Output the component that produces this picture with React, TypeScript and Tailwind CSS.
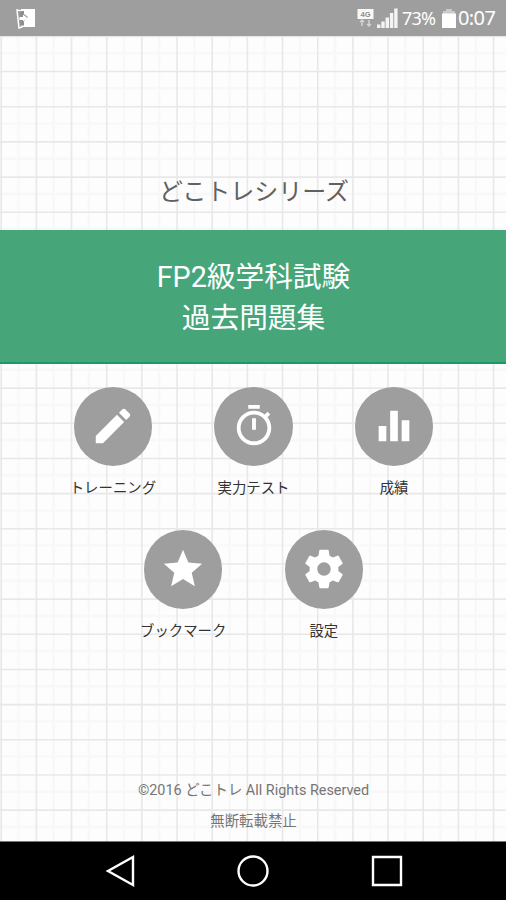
import { ReactNode } from "react";

const GRID = 35.17;

const paths = {
  edit: "M3 17.25V21h3.75L17.81 9.94l-3.75-3.75L3 17.25zM20.71 7.04c.39-.39.39-1.02 0-1.41l-2.34-2.34c-.39-.39-1.02-.39-1.41 0l-1.83 1.83 3.75 3.75 1.83-1.83z",
  timer:
    "M15 1H9v2h6V1zm-4 13h2V8h-2v6zm8.03-6.61l1.42-1.42c-.43-.51-.9-.99-1.41-1.41l-1.42 1.42C16.07 4.74 14.12 4 12 4c-4.97 0-9 4.03-9 9s4.02 9 9 9 9-4.03 9-9c0-2.12-.74-4.07-1.97-5.61zM12 20c-3.87 0-7-3.13-7-7s3.13-7 7-7 7 3.13 7 7-3.13 7-7 7z",
  chart: "M10 20h4V4h-4v16zm-6 0h4v-8H4v8zM16 9v11h4V9h-4z",
  star: "M12 17.27L18.18 21l-1.64-7.03L22 9.24l-7.19-.61L12 2 9.19 8.63 2 9.24l5.46 4.73L5.82 21z",
  settings:
    "M19.43 12.98c.04-.32.07-.64.07-.98s-.03-.66-.07-.98l2.11-1.65c.19-.15.24-.42.12-.64l-2-3.46c-.12-.22-.39-.3-.61-.22l-2.49 1c-.52-.4-1.08-.73-1.69-.98l-.38-2.65C14.46 2.18 14.25 2 14 2h-4c-.25 0-.46.18-.49.42l-.38 2.65c-.61.25-1.17.59-1.69.98l-2.49-1c-.23-.09-.49 0-.61.22l-2 3.46c-.13.22-.07.49.12.64l2.11 1.65c-.04.32-.07.65-.07.98s.03.66.07.98l-2.11 1.65c-.19.15-.24.42-.12.64l2 3.46c.12.22.39.3.61.22l2.49-1c.52.4 1.08.73 1.69.98l.38 2.65c.03.24.24.42.49.42h4c.25 0 .46-.18.49-.42l.38-2.65c.61-.25 1.17-.59 1.69-.98l2.49 1c.23.09.49 0 .61-.22l2-3.46c.12-.22.07-.49-.12-.64l-2.11-1.65zM12 15.5c-1.93 0-3.5-1.57-3.5-3.5s1.57-3.5 3.5-3.5 3.5 1.57 3.5 3.5-1.57 3.5-3.5 3.5z",
};

const GridPaper = () => (
  <svg className="absolute inset-0" width="506" height="805" fill="none">
    {Array.from({ length: 24 }, (_, i) => (
      <g key={i}>
        <path d={`M${18.5 + i * GRID} 0V805`} stroke="#f8f8f8" strokeWidth="2.5" />
        <path d={`M0 ${17.2 + i * GRID}H506`} stroke="#f8f8f8" strokeWidth="2.5" />
      </g>
    ))}
    {Array.from({ length: 24 }, (_, i) => (
      <g key={i}>
        <path d={`M${1.2 + i * GRID} 0V805`} stroke="#e8e8e8" strokeWidth="1.6" />
        <path d={`M0 ${0.4 + i * GRID}H506`} stroke="#e8e8e8" strokeWidth="1.6" />
      </g>
    ))}
  </svg>
);

const StatusBar = () => (
  <div className="flex h-9 items-center bg-[#9e9e9e] pr-[9px] pl-4 text-white">
    <svg width="20" height="21" viewBox="0 0 20 21">
      <path d="M5 1h14v18H5z" fill="#fff" />
      <path d="M1 2l5 1v16l-3 1z" fill="#999" stroke="#fff" strokeWidth="1.5" />
      <path d="M4.5 3H8v3l4 3-4 4v4.5H4.5z" fill="#8e8e8e" />
      <path d="M3.5 10.5h5" stroke="#fff" strokeWidth="3" />
      <path d="M7 6.500l4.500 3.500-4.500 3.500z" fill="#fff" />
    </svg>
    <div className="ml-auto flex items-center">
      <svg width="17" height="20" viewBox="0 0 17 20" className="mr-[3px]">
        <rect x="0.5" y="1" width="16" height="10" fill="#f8f8f8" />
        <text x="8.5" y="8.8" textAnchor="middle" fontSize="7.5" fontFamily="Liberation Sans, sans-serif" fontWeight="bold" fill="#8c8c8c">
          4G
        </text>
        <path d="M5 12v6M3 14l2-2 2 2M12 12v6M10 16l2 2 2-2" fill="none" stroke="#d4d4d4" strokeWidth="1.5" />
      </svg>
      <svg width="21" height="21" viewBox="0 0 21 21" fill="#f4f4f4">
        <path d="M0 16.5h3.4V20H0zM4.3 13.5h3.4V20H4.3zM8.6 9.5H12V20H8.6zM12.9 5h3.4v15h-3.4zM17.2.5h3.4V20h-3.4z" />
      </svg>
      <span className="ml-[4px] w-[34px] font-['Noto_Sans',sans-serif] text-[18px] leading-none tracking-[-0.8px] whitespace-nowrap">
        73%
      </span>
      <svg width="14" height="21" viewBox="0 0 14 21" className="ml-[6px]">
        <path d="M4 1h6v2h3v4H1V3h3z" fill="#cbcbcb" />
        <path d="M0 5.5h14V20H0z" fill="#fff" />
      </svg>
      <span className="ml-[2px] w-[39px] font-['Noto_Sans',sans-serif] text-[20px] leading-none tracking-[-0.6px] whitespace-nowrap">
        0:07
      </span>
    </div>
  </div>
);

const MenuButton = ({ icon, label }: { icon: keyof typeof paths; label: string }) => (
  <button className="flex w-[140.6px] flex-col items-center">
    <span className="flex size-[78.5px] items-center justify-center rounded-full bg-[#9e9e9e]">
      <svg width="46" height="46" viewBox="0 0 24 24" fill="#fff">
        <path d={paths[icon]} />
      </svg>
    </span>
    <span className="mt-[13px] text-[14.4px] leading-5 whitespace-nowrap text-[#333]">{label}</span>
  </button>
);

const NavIcon = ({ children }: { children: ReactNode }) => (
  <svg width="34" height="34" viewBox="0 0 34 34" fill="none" stroke="#fff" strokeWidth="2.4">
    {children}
  </svg>
);

const App = () => (
  <div className="flex h-[900px] w-[506px] flex-col overflow-hidden bg-[#fdfdfd] font-['Roboto','Noto_Sans_CJK_JP',sans-serif]">
    <StatusBar />

    <main className="relative flex h-[805px] flex-col overflow-hidden">
      <GridPaper />
      <div className="relative flex flex-1 flex-col items-center pl-px">
        <p className="mt-[138px] h-9 pl-px text-[24px] leading-9 text-[#616161]">どこトレシリーズ</p>

        <h1 className="mt-[19.5px] -ml-px flex h-[134.5px] w-[506px] flex-col items-center border-b-2 border-[#189b68] bg-[#46a67a] pt-[27.5px] pl-px text-[28.7px] leading-[41px] font-normal text-white">
          <span>FP2級学科試験</span>
          <span>過去問題集</span>
        </h1>

        <div className="mt-[23px] flex">
          <MenuButton icon="edit" label="トレーニング" />
          <MenuButton icon="timer" label="実力テスト" />
          <MenuButton icon="chart" label="成績" />
        </div>
        <div className="mt-[31.5px] flex">
          <MenuButton icon="star" label="ブックマーク" />
          <MenuButton icon="settings" label="設定" />
        </div>

        <footer className="mt-auto mb-[4px] text-center text-[14.4px] leading-[31px] text-[#757575]">
          <p>©2016 どこトレ All Rights Reserved</p>
          <p>無断転載禁止</p>
        </footer>
      </div>
    </main>

    <nav className="flex h-[59px] items-center justify-center gap-[99.5px] border-t border-[#777] bg-black">
      <NavIcon>
        <path d="M30 3v28L5 17z" />
      </NavIcon>
      <NavIcon>
        <circle cx="17" cy="17" r="14.5" />
      </NavIcon>
      <NavIcon>
        <path d="M3 3h28v28H3z" />
      </NavIcon>
    </nav>
  </div>
);

export default App;
